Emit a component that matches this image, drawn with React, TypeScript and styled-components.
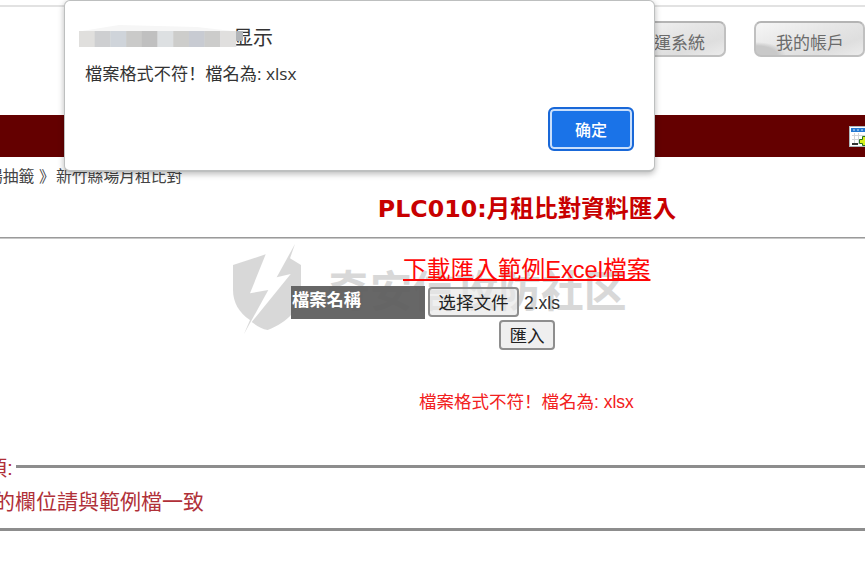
import React from 'react';
import styled, { createGlobalStyle } from 'styled-components';

const GlobalStyle = createGlobalStyle`
  * { box-sizing: border-box; }
  body {
    margin: 0;
    background: #fff;
    overflow: hidden;
    font-family: "Liberation Sans", "Noto Sans CJK TC", sans-serif;
  }
`;

const Page = styled.div`
  position: relative;
  width: 865px;
  height: 578px;
  overflow: hidden;
  display: flex;
  flex-direction: column;
  white-space: nowrap;
`;

const Header = styled.header`
  flex: none;
  height: 115px;
  padding-top: 5px;
`;

const TopRule = styled.div`
  height: 2px;
  background: #e2e2e2;
`;

const Tabs = styled.nav`
  display: flex;
  justify-content: flex-end;
  gap: 28px;
  padding-top: 14px;
`;

const Tab = styled.a<{ $inset: number }>`
  width: 111px;
  height: 36px;
  padding-left: ${(p) => p.$inset}px;
  border: 2px solid #c0c0c0;
  border-top-color: #b4b4b4;
  border-radius: 7px;
  background: radial-gradient(ellipse 30px 13px at 0 100%, #c9c9c9 0 70%, transparent 100%),
    linear-gradient(160deg, #f6f6f6 0%, #e6e6e6 45%, #dedede 75%, #ececec 100%);
  color: #6b6b6b;
  font-size: 17px;
  line-height: 41px;
`;

const MenuBar = styled.div`
  flex: none;
  height: 42px;
  display: flex;
  justify-content: flex-end;
  padding-top: 11px;
  background: #640000;
`;

const Breadcrumb = styled.div`
  flex: none;
  height: 36px;
  margin-left: -13px;
  padding-top: 9px;
  display: flex;
  color: #444;
  font-size: 15.8px;
  line-height: 22px;
`;

const Crumb = styled.span<{ $width: number }>`
  width: ${(p) => p.$width}px;
`;

const Title = styled.h1`
  flex: none;
  height: 44px;
  margin: 0;
  padding: 0 0 0 189px;
  text-align: center;
  color: #c80000;
  font: bold 23.7px/32px "DejaVu Sans", "Noto Sans CJK TC", sans-serif;
`;

const Rule = styled.div`
  flex: none;
  height: 2px;
  background: linear-gradient(#9a9a9a 50%, #c8c8c8 50%);
`;

const Form = styled.form`
  position: relative;
  z-index: 1;
  flex: none;
  height: 214px;
  padding: 15px 0 0 291px;
`;

const Download = styled.a`
  display: block;
  height: 32px;
  margin-left: 112px;
  color: #ff0808;
  font-size: 23.7px;
  line-height: 33px;
  text-decoration: underline;
  text-decoration-thickness: 2px;
  text-underline-offset: 1px;
  text-decoration-skip-ink: none;
`;

const FileRow = styled.div`
  display: flex;
  height: 34px;
  align-items: flex-start;
`;

const Label = styled.label`
  width: 134px;
  height: 33px;
  margin-right: 3px;
  padding-left: 1px;
  background: rgba(93, 93, 93, 0.94);
  color: #fff;
  font-size: 17.3px;
  font-weight: bold;
  line-height: 28px;
`;

const Button = styled.button<{ $width: number }>`
  width: ${(p) => p.$width}px;
  height: 30px;
  padding: 0;
  border: 2px solid #8e8e8e;
  border-radius: 4px;
  background: rgba(232, 232, 232, 0.7);
  color: #222;
  font: 17.6px/28px "Liberation Sans", "Noto Sans CJK SC", sans-serif;
`;

const FileButton = styled(Button)`
  margin-top: 1px;
`;

const FileName = styled.span`
  margin-left: 5px;
  color: #333;
  font-size: 17.5px;
  line-height: 35px;
`;

const Submit = styled.div`
  height: 32px;
  padding-left: 208px;
`;

const ErrorText = styled.p`
  margin: 36px 0 0 128px;
  color: #f22020;
  font-size: 17.5px;
  line-height: 26px;
`;

const FullWidthMark = styled.span`
  font-family: "Noto Sans CJK SC", sans-serif;
`;

const Notes = styled.section`
  width: 100%;
  height: 78px;
  border-bottom: 3px solid #8d8d8d;
  color: #b03038;
  font-size: 21px;
`;

const Legend = styled.div`
  display: flex;
  align-items: center;
  height: 30px;
  margin-left: -14px;
  line-height: 28px;
  &::after {
    content: "";
    flex: 1;
    height: 3px;
    margin: -4px 0 0 3px;
    background: #8d8d8d;
  }
`;

const Note = styled.p`
  margin: 2px 0 0 -6px;
  line-height: 34px;
`;

const Watermark = styled.div`
  position: absolute;
  z-index: 0;
  left: 232px;
  top: 244px;
  display: flex;
  opacity: 0.36;
  color: #969696;
  pointer-events: none;
`;

const WatermarkText = styled.span`
  margin: 20px 0 0 25px;
  font: bold 42.8px/48px "Noto Sans CJK SC", sans-serif;
`;

const Dialog = styled.div`
  position: absolute;
  z-index: 2;
  left: 64px;
  top: 0;
  width: 591px;
  height: 172px;
  padding: 22px 22px 0 14px;
  border: 1px solid #bdbfbf;
  border-width: 1px 1px 2px;
  border-radius: 6px;
  background: #fff;
  box-shadow: 0 2px 6px rgba(0, 0, 0, 0.28);
  display: flex;
  flex-direction: column;
  color: #333;
`;

const Origin = styled.div`
  display: flex;
  height: 28px;
  font: 20px/28px "Noto Sans CJK SC", sans-serif;
`;

const Mosaic = styled.svg`
  display: block;
  margin: 2px -11px 0 0;
  position: relative;
`;

const Message = styled.p`
  margin: 8px 0 0 6px;
  font: 17.2px/28px "Open Sans", "Noto Sans CJK TC", sans-serif;
`;

const Confirm = styled.button`
  align-self: flex-end;
  width: 86px;
  height: 44px;
  margin: 19px -2px 0 0;
  padding: 0;
  border: 2px solid #1968d8;
  border-radius: 6px;
  background: #1a73e8;
  box-shadow: inset 0 0 0 2px #c9dffc;
  color: #fff;
  font: 500 16px/40px "Noto Sans CJK SC", sans-serif;
`;

const mosaicColors = ['#e0dfdd', '#cecfd1', '#cfd4da', '#cacac9', '#c0c0c0', '#dde0e2', '#cdcdcb', '#c8cbd2', '#cccccb', '#e0dfde'];

function CalendarIcon() {
  return (
    <svg width="16" height="22" viewBox="0 0 16 22">
      <rect x="0.5" y="0.5" width="20" height="20" fill="#fff" stroke="#adb8bd" />
      <path d="M2 2h14v4H2z" fill="#2479d2" />
      <path d="M4 4h2M8 4h2M12 4h2" stroke="#d5edff" />
      <path d="M3 9.5h13M3 13.5h13M5.5 7v11M9.5 7v11" stroke="#d2d5d8" />
      <path d="M3 18h6" stroke="#333" strokeWidth="2" />
      <path d="M13.5 10.5h4v4h4v5h-8v-2h-3v-4h3z" fill="#d6ed1b" stroke="#27701c" />
    </svg>
  );
}

function Shield() {
  return (
    <svg width="70" height="92" viewBox="0 0 70 92" fill="currentColor">
      <path d="M1 21L33.700 10.300L18 49.300L36.300 46L12 90L18 76C7 69 1 58 1 46z" />
      <path d="M63 0L44.700 33.300L58.700 30L19.700 78C25 82 30 85 35.700 86C56 78 69 65 69 45V21L58 14.300z" />
    </svg>
  );
}

function FormatError() {
  return (
    <>
      檔案格式不符<FullWidthMark>！</FullWidthMark>檔名為: xlsx
    </>
  );
}

export default function App() {
  return (
    <>
      <GlobalStyle />
      <Page>
        <Header>
          <TopRule />
          <Tabs>
            <Tab $inset={20}>營運系統</Tab>
            <Tab $inset={20}>我的帳戶</Tab>
          </Tabs>
        </Header>
        <MenuBar><CalendarIcon /></MenuBar>
        <Breadcrumb>
          <Crumb $width={52}>場抽籤</Crumb>
          <Crumb $width={17}>》</Crumb>
          <span>新竹縣場月租比對</span>
        </Breadcrumb>
        <Title>PLC010:月租比對資料匯入</Title>
        <Rule />
        <Form>
          <Download>下載匯入範例Excel檔案</Download>
          <FileRow>
            <Label>檔案名稱</Label>
            <FileButton type="button" $width={91}>选择文件</FileButton>
            <FileName>2.xls</FileName>
          </FileRow>
          <Submit><Button type="button" $width={56}>匯入</Button></Submit>
          <ErrorText><FormatError /></ErrorText>
        </Form>
        <Notes>
          <Legend>項:</Legend>
          <Note>的欄位請與範例檔一致</Note>
        </Notes>
        <Watermark>
          <Shield />
          <WatermarkText>奇安信攻防社区</WatermarkText>
        </Watermark>
        <Dialog>
          <Origin>
            <Mosaic width="165" height="24" viewBox="0 0 165 24">
              <path d="M3 6L40 0L118 2L153 6z" fill="#f6f6f6" />
              {mosaicColors.map((color, i) => (
                <rect key={color + i} x={i * 15.7} y="6" width="16" height="16" fill={color} />
              ))}
              <rect x="157" y="6" width="7" height="10" fill="#b2b5b8" />
            </Mosaic>
            显示
          </Origin>
          <Message><FormatError /></Message>
          <Confirm>确定</Confirm>
        </Dialog>
      </Page>
    </>
  );
}
